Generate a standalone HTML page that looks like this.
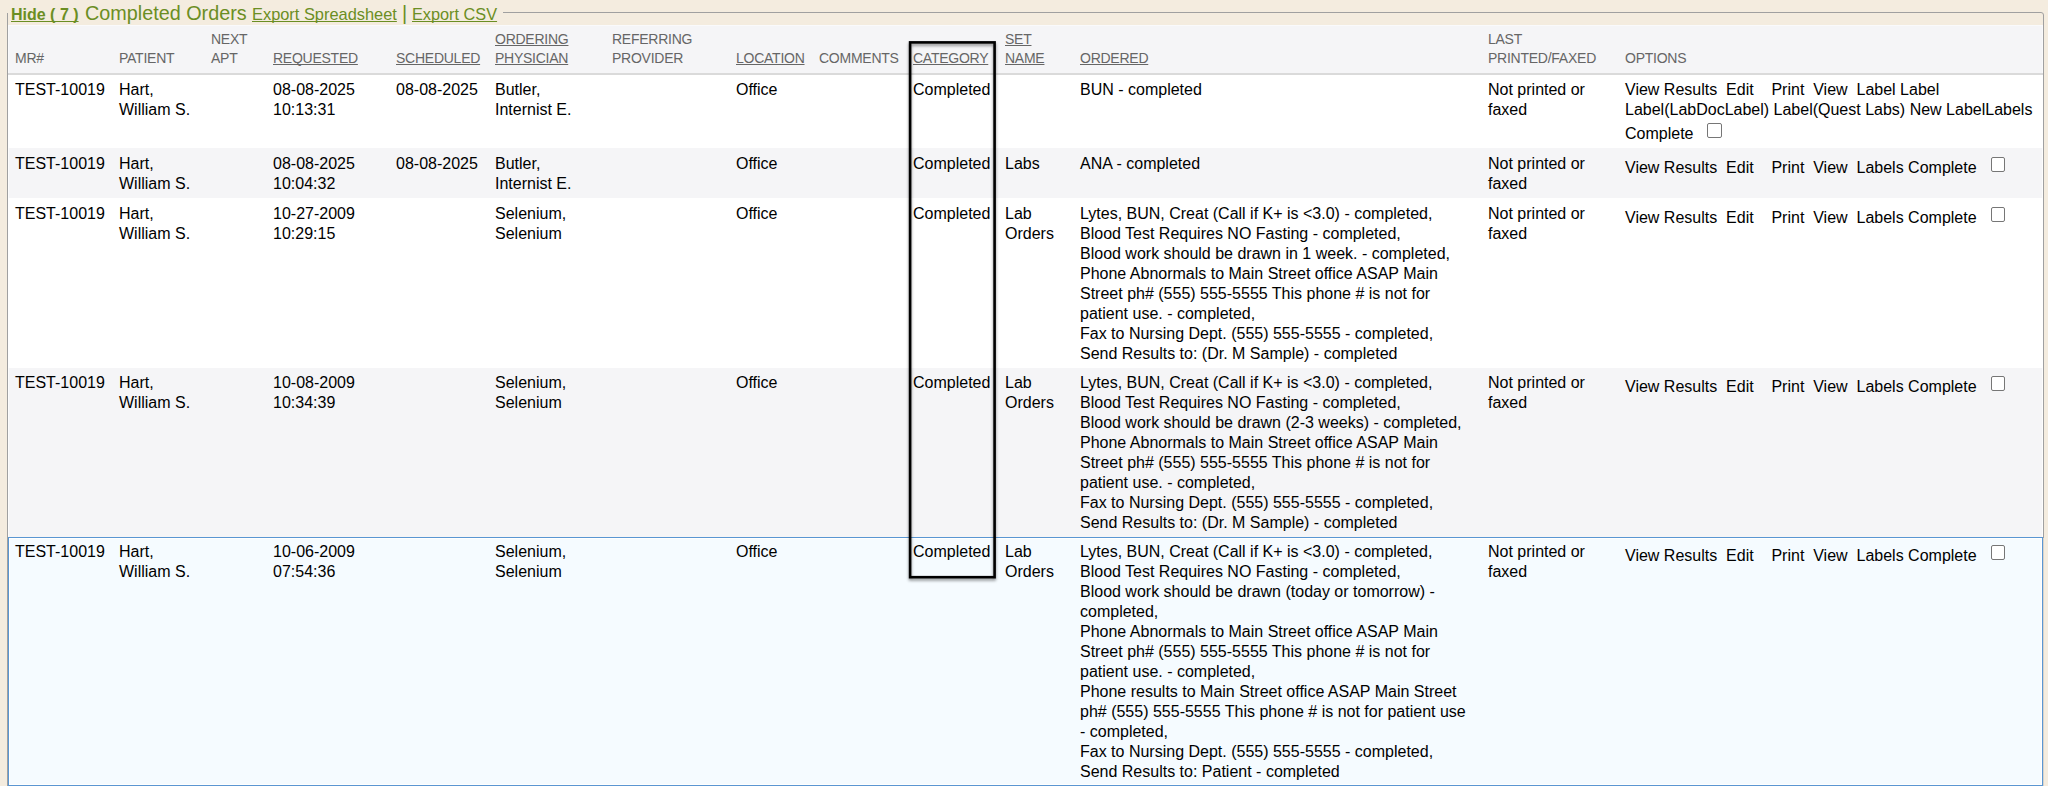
<!DOCTYPE html>
<html><head><meta charset="utf-8">
<style>
html,body{margin:0;padding:0;}
*{text-decoration-skip-ink:none;}
body{width:2048px;height:786px;overflow:hidden;background:#f4ecdf;font-family:"Liberation Sans",sans-serif;position:relative;}
.fs{position:absolute;left:7px;top:12px;width:2035px;height:900px;border:1px solid #a0a0a0;border-radius:0 3px 3px 0;}
.lg{position:absolute;left:0;top:0;width:503px;height:13px;background:#f4ecdf;color:#6b8e23;white-space:nowrap;}
.lg span{position:absolute;top:0;line-height:24px;}
.lg .hide{left:11px;font-weight:bold;font-size:16px;text-decoration:underline;top:4px;line-height:22px;}
.lg .co{left:85px;font-size:19.8px;top:1px;}
.lg .ex1{left:252px;font-size:16.4px;text-decoration:underline;top:3px;line-height:22px;}
.lg .bar{left:402px;font-size:20px;top:1px;}
.lg .ex2{left:412px;font-size:16.3px;text-decoration:underline;top:3px;line-height:22px;}
table{position:absolute;left:8px;top:25px;width:2035px;border-collapse:collapse;table-layout:fixed;background:#fff;}
th{background:#f5f5f7;color:#666;font-weight:normal;font-size:14px;letter-spacing:-0.25px;line-height:19px;text-align:left;vertical-align:bottom;padding:5px 0 5px 7px;border-bottom:2px solid #dadada;white-space:nowrap;}
th u{text-decoration:underline;}
td{font-size:16px;line-height:20px;color:#000;vertical-align:top;padding:5px 0 0 7px;white-space:nowrap;}
tr.r2 td{padding-top:6px;}
tr.r3 td{padding-top:5.5px;}
tr.g td{background:#f5f5f7;}
tr.h td{background:#f5fbff;}
.cb{display:inline-block;width:14.5px;height:15px;box-sizing:border-box;border:1px solid #767676;border-radius:2px;background:#fff;vertical-align:baseline;}
.hov{position:absolute;left:8px;top:537px;width:2035px;height:249px;box-sizing:border-box;border:1px solid #5a96d2;}
.hov2{position:absolute;left:9px;top:538px;width:2033px;height:247px;box-sizing:border-box;border:1px solid #fff;}
.rect{position:absolute;left:0;top:0;filter:drop-shadow(0 2px 1.5px rgba(0,0,0,.45));}
</style></head><body>
<div class="fs"></div>
<div class="lg">
<span class="hide">Hide ( 7 )</span>
<span class="co">Completed Orders</span>
<span class="ex1">Export Spreadsheet</span>
<span class="bar">|</span>
<span class="ex2">Export CSV</span>
</div>
<table>
<colgroup>
<col style="width:104px"><col style="width:92px"><col style="width:62px"><col style="width:123px"><col style="width:99px"><col style="width:117px"><col style="width:124px"><col style="width:83px"><col style="width:94px"><col style="width:92px"><col style="width:75px"><col style="width:408px"><col style="width:137px"><col>
</colgroup>
<tr>
<th>MR#</th><th>PATIENT</th><th>NEXT<br>APT</th><th><u>REQUESTED</u></th><th><u>SCHEDULED</u></th><th><u>ORDERING</u><br><u>PHYSICIAN</u></th><th>REFERRING<br>PROVIDER</th><th><u>LOCATION</u></th><th>COMMENTS</th><th><u>CATEGORY</u></th><th><u>SET</u><br><u>NAME</u></th><th><u>ORDERED</u></th><th>LAST<br>PRINTED/FAXED</th><th>OPTIONS</th>
</tr>
<tr style="height:74px">
<td>TEST-10019</td><td>Hart,<br>William S.</td><td></td><td>08-08-2025<br>10:13:31</td><td>08-08-2025</td><td>Butler,<br>Internist E.</td><td></td><td>Office</td><td></td><td>Completed</td><td></td><td>BUN - completed</td><td>Not printed or<br>faxed</td>
<td>View Results&nbsp; Edit&nbsp; &nbsp; Print&nbsp; View&nbsp; Label Label<br>Label(LabDocLabel) Label(Quest Labs) New LabelLabels<br>Complete <span class="cb" style="margin:3px 3px 1px 9.5px"></span></td>
</tr>
<tr class="g r2" style="height:50px">
<td>TEST-10019</td><td>Hart,<br>William S.</td><td></td><td>08-08-2025<br>10:04:32</td><td>08-08-2025</td><td>Butler,<br>Internist E.</td><td></td><td>Office</td><td></td><td>Completed</td><td>Labs</td><td>ANA - completed</td><td>Not printed or<br>faxed</td>
<td>View Results&nbsp; Edit&nbsp; &nbsp; Print&nbsp; View&nbsp; Labels Complete <span class="cb" style="margin:3px 3px 1px 9.5px"></span></td>
</tr>
<tr class="r3" style="height:170px">
<td>TEST-10019</td><td>Hart,<br>William S.</td><td></td><td>10-27-2009<br>10:29:15</td><td></td><td>Selenium,<br>Selenium</td><td></td><td>Office</td><td></td><td>Completed</td><td>Lab<br>Orders</td>
<td>Lytes, BUN, Creat (Call if K+ is &lt;3.0) - completed,<br>Blood Test Requires NO Fasting - completed,<br>Blood work should be drawn in 1 week. - completed,<br>Phone Abnormals to Main Street office ASAP Main<br>Street ph# (555) 555-5555 This phone # is not for<br>patient use. - completed,<br>Fax to Nursing Dept. (555) 555-5555 - completed,<br>Send Results to: (Dr. M Sample) - completed</td>
<td>Not printed or<br>faxed</td>
<td>View Results&nbsp; Edit&nbsp; &nbsp; Print&nbsp; View&nbsp; Labels Complete <span class="cb" style="margin:3px 3px 1px 9.5px"></span></td>
</tr>
<tr class="g" style="height:169px">
<td>TEST-10019</td><td>Hart,<br>William S.</td><td></td><td>10-08-2009<br>10:34:39</td><td></td><td>Selenium,<br>Selenium</td><td></td><td>Office</td><td></td><td>Completed</td><td>Lab<br>Orders</td>
<td>Lytes, BUN, Creat (Call if K+ is &lt;3.0) - completed,<br>Blood Test Requires NO Fasting - completed,<br>Blood work should be drawn (2-3 weeks) - completed,<br>Phone Abnormals to Main Street office ASAP Main<br>Street ph# (555) 555-5555 This phone # is not for<br>patient use. - completed,<br>Fax to Nursing Dept. (555) 555-5555 - completed,<br>Send Results to: (Dr. M Sample) - completed</td>
<td>Not printed or<br>faxed</td>
<td>View Results&nbsp; Edit&nbsp; &nbsp; Print&nbsp; View&nbsp; Labels Complete <span class="cb" style="margin:3px 3px 1px 9.5px"></span></td>
</tr>
<tr class="h" style="height:249px">
<td>TEST-10019</td><td>Hart,<br>William S.</td><td></td><td>10-06-2009<br>07:54:36</td><td></td><td>Selenium,<br>Selenium</td><td></td><td>Office</td><td></td><td>Completed</td><td>Lab<br>Orders</td>
<td>Lytes, BUN, Creat (Call if K+ is &lt;3.0) - completed,<br>Blood Test Requires NO Fasting - completed,<br>Blood work should be drawn (today or tomorrow) -<br>completed,<br>Phone Abnormals to Main Street office ASAP Main<br>Street ph# (555) 555-5555 This phone # is not for<br>patient use. - completed,<br>Phone results to Main Street office ASAP Main Street<br>ph# (555) 555-5555 This phone # is not for patient use<br>- completed,<br>Fax to Nursing Dept. (555) 555-5555 - completed,<br>Send Results to: Patient - completed</td>
<td>Not printed or<br>faxed</td>
<td>View Results&nbsp; Edit&nbsp; &nbsp; Print&nbsp; View&nbsp; Labels Complete <span class="cb" style="margin:3px 3px 1px 9.5px"></span></td>
</tr>
</table>
<div style="position:absolute;left:8px;top:25px;width:2035px;height:1px;background:#fafafb"></div>
<div style="position:absolute;left:8px;top:25px;width:1px;height:48px;background:#fafafb"></div>
<div style="position:absolute;left:2042px;top:25px;width:1px;height:48px;background:#fafafb"></div>
<div style="position:absolute;left:8px;top:148px;width:1px;height:50px;background:#fdfdfd"></div>
<div style="position:absolute;left:2042px;top:148px;width:1px;height:50px;background:#fdfdfd"></div>
<div style="position:absolute;left:8px;top:368px;width:1px;height:169px;background:#fdfdfd"></div>
<div style="position:absolute;left:2042px;top:368px;width:1px;height:169px;background:#fdfdfd"></div>
<div style="position:absolute;left:2043px;top:538px;width:1px;height:248px;background:#d8d3ca"></div>
<div class="hov"></div>
<div class="hov2"></div>
<svg class="rect" width="2048" height="786" viewBox="0 0 2048 786"><rect x="910.1" y="42.4" width="84.5" height="534.8" fill="none" stroke="#000" stroke-width="2.6"/></svg>
</body></html>
